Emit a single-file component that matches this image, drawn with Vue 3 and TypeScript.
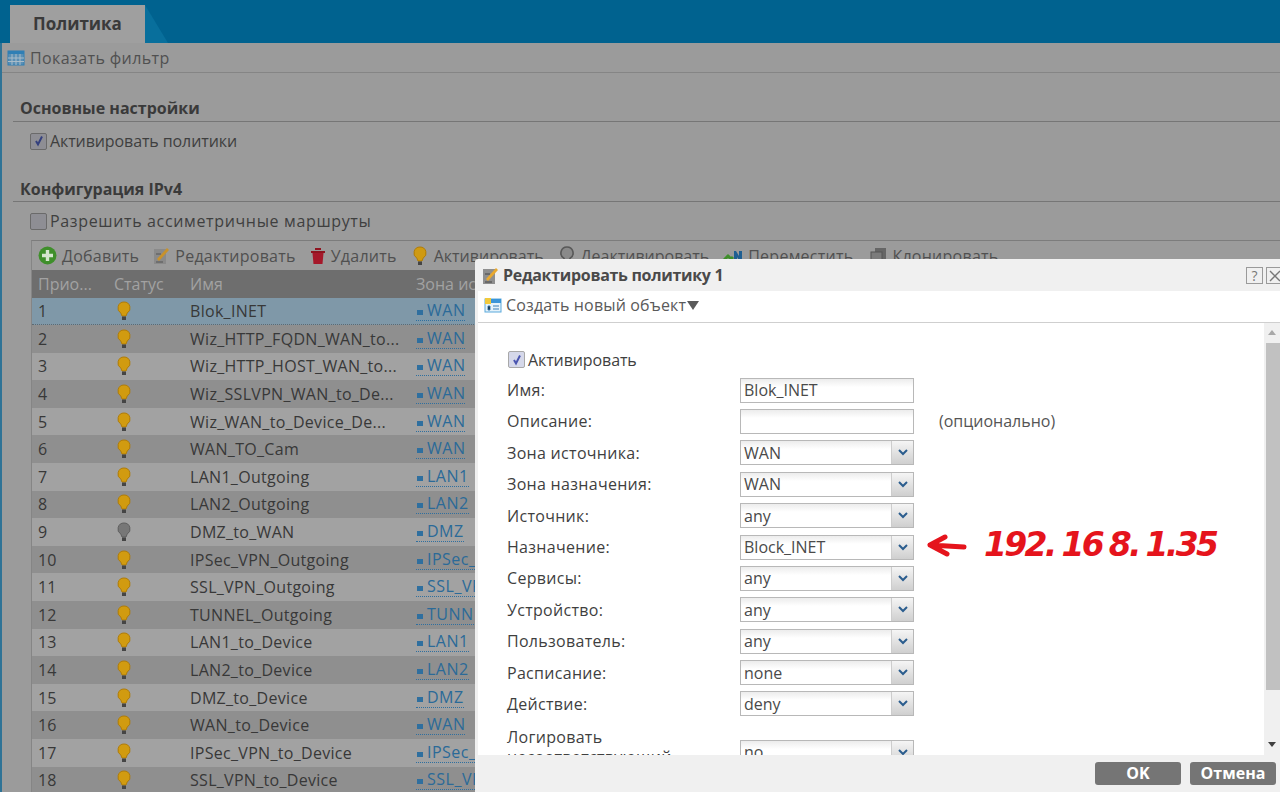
<template>
  <div class="page">
    <header class="topbar">
      <div class="tab">Политика</div>
    </header>

    <main class="content">
      <div class="filter">
        <svg class="ico" width="18" height="16" viewBox="0 0 18 16">
          <rect x="1" y="1" width="16" height="14" fill="#5a8fb4" stroke="#2f7fb5" />
          <rect x="1" y="1" width="16" height="3" fill="#2f7fb5" />
          <path d="M5 4v11M9 4v11M13 4v11M1 8h16M1 11.5h16" stroke="#a9bcc9" stroke-width="1" />
        </svg>
        <span>Показать фильтр</span>
      </div>

      <section class="settings">
        <h2 class="heading">Основные настройки</h2>
        <label class="check-row">
          <span class="box"><svg width="12" height="12" viewBox="0 0 12 12"><path d="M3 6l2 3.5L9 1.5" fill="none" stroke="#34407e" stroke-width="2" /></svg></span>
          Активировать политики
        </label>

        <h2 class="heading second">Конфигурация IPv4</h2>
        <label class="check-row wide">
          <span class="box"></span>
          Разрешить ассиметричные маршруты
        </label>
      </section>

      <div class="table">
        <div class="tools">
          <span class="tool">
            <svg width="19" height="19" viewBox="0 0 19 19"><circle cx="9.5" cy="9.5" r="9" fill="#3f8f2b" /><path d="M9.5 4v11M4 9.5h11" stroke="#d6e6cf" stroke-width="3.4" /></svg>
            Добавить
          </span>
          <span class="tool">
            <svg width="17" height="19" viewBox="0 0 17 19"><rect x="1" y="3" width="12" height="15" fill="#8a8a8a" /><path d="M4 13L14 2l2 2L6 15z" fill="#c8922c" /><path d="M3 8h5M3 16h7" stroke="#555" /></svg>
            Редактировать
          </span>
          <span class="tool">
            <svg width="16" height="18" viewBox="0 0 16 18"><path d="M1 4h14v2H1zM5 1h6v2H5z" fill="#8f1420" /><path d="M2.5 6h11l-1 11h-9z" fill="#a5182a" /></svg>
            Удалить
          </span>
          <span class="tool bulb-tool">
            <svg width="14" height="20" viewBox="0 0 14 20"><path d="M7 1a6 6 0 0 1 3.2 11.1L9 15H5l-1.2-2.9A6 6 0 0 1 7 1z" fill="#cf9a12" stroke="#b07c08" /><path d="M5 15.5h4V19H5z" fill="#454545" /></svg>
            Активировать
          </span>
          <span class="tool bulb-tool">
            <svg width="14" height="20" viewBox="0 0 14 20"><path d="M7 1a6 6 0 0 1 3.2 11.1L9 15H5l-1.2-2.9A6 6 0 0 1 7 1z" fill="#8a8a8a" stroke="#585858" stroke-width="1.6" /><path d="M5 15.5h4V19H5z" fill="#454545" /></svg>
            Деактивировать
          </span>
          <span class="tool">
            <svg width="20" height="16" viewBox="0 0 20 16"><path d="M1 12l4-4 3 3 2-2" fill="none" stroke="#3f8f2b" stroke-width="3" /><path d="M11 14V3h2l3 5V3h3v11h-2l-3-5v5z" fill="#1f5f92" /></svg>
            Переместить
          </span>
          <span class="tool last-tool">
            <svg width="17" height="18" viewBox="0 0 17 18"><rect x="5" y="1" width="11" height="12" fill="#666" /><rect x="1" y="5" width="11" height="12" fill="#7c7c7c" stroke="#555" /></svg>
            Клонировать
          </span>
        </div>

        <div class="thead">
          <span>Прио...</span>
          <span>Статус</span>
          <span>Имя</span>
          <span>Зона источника</span>
        </div>

        <div
          v-for="(row, i) in rows"
          :key="row.name"
          class="trow"
          :class="{ selected: i === 0, odd: i > 0 && i % 2 === 1 }"
        >
          <span>{{ i + 1 }}</span>
          <span class="bulb-cell">
            <svg width="14" height="20" viewBox="0 0 14 20">
              <path
                d="M7 1a6 6 0 0 1 3.2 11.1L9 15H5l-1.2-2.9A6 6 0 0 1 7 1z"
                :fill="row.off ? '#777' : '#d19b10'"
                :stroke="row.off ? '#5f5f5f' : '#b07c08'"
              />
              <path d="M5 15.5h4V19H5z" fill="#454545" />
            </svg>
          </span>
          <span class="name">{{ row.name }}</span>
          <span class="zone"><i class="zone-dot"></i>{{ row.zone }}</span>
        </div>
      </div>
    </main>

    <!-- dialog lies over the dimmed page -->
    <div class="dialog">
      <div class="dlg-title">
        <svg width="17" height="19" viewBox="0 0 17 19"><rect x="1" y="3" width="12" height="15" fill="#8f8f8f" /><path d="M4 13L14 2l2 2L6 15z" fill="#e9a92f" /><path d="M3 8h5M3 16h7" stroke="#444" /></svg>
        <strong>Редактировать политику 1</strong>
        <span class="win-btns">
          <span class="win-btn">?</span>
          <span class="win-btn">
            <svg width="12" height="12" viewBox="0 0 12 12"><path d="M1 1l10 10M11 1L1 11" stroke="#777" stroke-width="1.4" /></svg>
          </span>
        </span>
      </div>

      <div class="dlg-inner">
        <div class="dlg-tools">
          <svg width="18" height="16" viewBox="0 0 18 16"><rect x="1" y="2" width="16" height="13" fill="#e4f2fa" stroke="#5aa9dc" /><rect x="1" y="2" width="16" height="4" fill="#3b95d8" /><rect x="1" y="1" width="6" height="6" fill="#f1c93c" /><path d="M4 9h2v4H4zM9 9h6M9 12h6" stroke="#3b7fb5" /></svg>
          <span>Создать новый объект</span>
          <span class="caret"></span>
        </div>

        <div class="dlg-scrollarea">
          <div class="form">
            <label class="form-check">
              <span class="box light"><svg width="12" height="12" viewBox="0 0 12 12"><path d="M3 6l2 3.5L9 1.5" fill="none" stroke="#4a55b0" stroke-width="2" /></svg></span>
              Активировать
            </label>

            <div v-for="field in fields" :key="field.label" class="form-row" :class="{ tall: field.tall }">
              <span class="form-label">{{ field.label }}</span>
              <div class="control" :class="{ text: field.kind === 'text' }">
                <span class="value">{{ field.value }}</span>
                <span v-if="field.kind === 'select'" class="arrow">
                  <svg width="10" height="7" viewBox="0 0 10 7"><path d="M1 1l4 4 4-4" fill="none" stroke="#2b5d8e" stroke-width="2" /></svg>
                </span>
              </div>
              <span v-if="field.hint" class="hint">{{ field.hint }}</span>
            </div>
          </div>

          <div class="scrollbar">
            <span class="up"></span>
            <div class="thumb"></div>
            <span class="down"></span>
          </div>
        </div>
      </div>

      <div class="dlg-foot">
        <button class="btn" type="button">OK</button>
        <button class="btn" type="button">Отмена</button>
      </div>

      <!-- red marker note on top of the form -->
      <svg class="note-arrow" width="42" height="26" viewBox="0 0 42 26">
        <path d="M4 12L38 14M19 4L4 12L21 21" fill="none" stroke="#e5141c" stroke-width="5" stroke-linecap="round" stroke-linejoin="round" />
      </svg>
      <span class="note">192. 16 8. 1.35</span>
    </div>
  </div>
</template>

<script setup lang="ts">
interface Row {
  name: string;
  zone: string;
  off?: boolean;
}

interface Field {
  label: string;
  value: string;
  kind: 'text' | 'select';
  hint?: string;
  tall?: boolean;
}

const rows: Row[] = [
  { name: 'Blok_INET', zone: 'WAN' },
  { name: 'Wiz_HTTP_FQDN_WAN_to...', zone: 'WAN' },
  { name: 'Wiz_HTTP_HOST_WAN_to...', zone: 'WAN' },
  { name: 'Wiz_SSLVPN_WAN_to_De...', zone: 'WAN' },
  { name: 'Wiz_WAN_to_Device_De...', zone: 'WAN' },
  { name: 'WAN_TO_Cam', zone: 'WAN' },
  { name: 'LAN1_Outgoing', zone: 'LAN1' },
  { name: 'LAN2_Outgoing', zone: 'LAN2' },
  { name: 'DMZ_to_WAN', zone: 'DMZ', off: true },
  { name: 'IPSec_VPN_Outgoing', zone: 'IPSec_VPN' },
  { name: 'SSL_VPN_Outgoing', zone: 'SSL_VPN' },
  { name: 'TUNNEL_Outgoing', zone: 'TUNNEL' },
  { name: 'LAN1_to_Device', zone: 'LAN1' },
  { name: 'LAN2_to_Device', zone: 'LAN2' },
  { name: 'DMZ_to_Device', zone: 'DMZ' },
  { name: 'WAN_to_Device', zone: 'WAN' },
  { name: 'IPSec_VPN_to_Device', zone: 'IPSec_VPN' },
  { name: 'SSL_VPN_to_Device', zone: 'SSL_VPN' },
];

const fields: Field[] = [
  { label: 'Имя:', value: 'Blok_INET', kind: 'text' },
  { label: 'Описание:', value: '', kind: 'text', hint: '(опционально)' },
  { label: 'Зона источника:', value: 'WAN', kind: 'select' },
  { label: 'Зона назначения:', value: 'WAN', kind: 'select' },
  { label: 'Источник:', value: 'any', kind: 'select' },
  { label: 'Назначение:', value: 'Block_INET', kind: 'select' },
  { label: 'Сервисы:', value: 'any', kind: 'select' },
  { label: 'Устройство:', value: 'any', kind: 'select' },
  { label: 'Пользователь:', value: 'any', kind: 'select' },
  { label: 'Расписание:', value: 'none', kind: 'select' },
  { label: 'Действие:', value: 'deny', kind: 'select' },
  { label: 'Логировать несоответствующий трафик:', value: 'no', kind: 'select', tall: true },
];
</script>

<style scoped>
.page {
  position: relative;
  width: 1280px;
  height: 792px;
  overflow: hidden;
  background: #9b9b9b;
  font-family: "Open Sans", "Noto Sans", sans-serif;
  font-size: 16px;
  color: #3c3c3c;
}

.topbar {
  height: 43px;
  background: #00628f;
  padding: 5px 0 0 10px;
  box-sizing: border-box;
}

.tab {
  position: relative;
  width: 135px;
  height: 38px;
  background: #9f9f9f;
  font-size: 17px;
  font-weight: 700;
  line-height: 38px;
  padding-left: 23px;
  box-sizing: border-box;
  color: #3a3a3a;
}

.tab::after {
  content: "";
  position: absolute;
  left: 100%;
  top: 0;
  width: 23px;
  height: 38px;
  background: #086f9c;
  clip-path: polygon(0 0, 100% 100%, 0 100%);
}

.content {
  border-left: 2px solid #2f7396;
}

.filter {
  display: flex;
  align-items: center;
  gap: 5px;
  height: 30px;
  padding-left: 5px;
  border-bottom: 1px solid #858585;
  box-sizing: border-box;
  color: #505050;
  letter-spacing: 0.4px;
}

.settings {
  padding-left: 11px;
}

.heading {
  margin: 0;
  height: 49px;
  padding: 24px 0 0 7px;
  box-sizing: border-box;
  border-bottom: 1px solid #767676;
  font-size: 16px;
  line-height: 22px;
  font-weight: 700;
  color: #3a3a3a;
}

.heading.second {
  height: 42px;
  padding-top: 18px;
}

.check-row {
  display: flex;
  align-items: center;
  gap: 3px;
  height: 38px;
  padding-left: 17px;
  color: #3f3f3f;
  letter-spacing: -0.1px;
}

.check-row.wide {
  letter-spacing: 0.65px;
}

.box {
  display: flex;
  align-items: center;
  justify-content: center;
  width: 15px;
  height: 15px;
  background: #8e8e94;
  border: 1px solid #6a6a6a;
  border-radius: 2px;
}

.box.light {
  background: #d5d8ea;
  border-color: #a8a8a8;
}

.table {
  margin-left: 29px;
  border-left: 1px solid #858585;
  border-top: 1px solid #7c7c7c;
}

.tools {
  display: flex;
  align-items: center;
  gap: 14px;
  height: 29px;
  padding-left: 6px;
  color: #505050;
  letter-spacing: 0.25px;
}

.tool {
  display: flex;
  align-items: center;
  gap: 5px;
  white-space: nowrap;
}

.bulb-tool {
  gap: 7px;
  margin-left: 2px;
  letter-spacing: 0;
}

.last-tool {
  margin-left: 3px;
}

.thead,
.trow {
  display: grid;
  grid-template-columns: 76px 76px 226px 1fr;
  align-items: center;
  padding-left: 6px;
}

.thead {
  height: 27.5px;
  background: #6e6e6e;
  color: #a2a2a2;
}

.trow {
  height: 27.6px;
  background: #a2a2a2;
  color: #383838;
}

.trow.odd {
  background: #8f8f8f;
}

.trow.selected {
  background: #7f98a8;
  border-bottom: 1px dotted #5e6a72;
  box-sizing: border-box;
}

.bulb-cell {
  display: flex;
  padding-left: 3px;
}

.name {
  white-space: nowrap;
  letter-spacing: 0.3px;
}

.zone {
  display: flex;
  align-items: center;
  gap: 4px;
  justify-self: start;
  line-height: 19px;
  border-bottom: 1px dotted #2f6f9f;
  color: #2b6a98;
  letter-spacing: 0.5px;
}

.zone-dot {
  display: block;
  width: 6px;
  height: 5px;
  background: #2f6f9f;
  margin: 4px 0 0 1px;
}

.dialog {
  position: absolute;
  left: 475px;
  top: 259px;
  width: 805px;
  height: 533px;
  display: flex;
  flex-direction: column;
  background: #f0f0f0;
  border-radius: 3px 0 0 0;
}

.dlg-title {
  display: flex;
  align-items: center;
  gap: 4px;
  height: 32px;
  flex: none;
  padding-left: 7px;
  color: #4a4a4a;
}

.dlg-title strong {
  font-size: 16px;
  letter-spacing: -0.3px;
}

.win-btns {
  display: flex;
  gap: 3px;
  margin-left: auto;
  margin-top: 1px;
}

.win-btn {
  display: flex;
  align-items: center;
  justify-content: center;
  width: 15px;
  height: 15px;
  border: 1px solid #9a9a9a;
  font-size: 14px;
  color: #777;
}

.win-btns .win-btn:last-child {
  margin-right: -3px;
}

.dlg-inner {
  flex: 1;
  min-height: 0;
  margin-left: 3px;
  display: flex;
  flex-direction: column;
  background: #fff;
}

.dlg-tools {
  display: flex;
  align-items: center;
  gap: 4px;
  height: 32px;
  flex: none;
  padding: 0 0 3px 6px;
  border-bottom: 1px solid #cfcfcf;
  box-sizing: border-box;
  color: #5a5a5a;
  letter-spacing: 0.15px;
}

.caret {
  width: 0;
  height: 0;
  margin-left: -3px;
  border-left: 6px solid transparent;
  border-right: 6px solid transparent;
  border-top: 9px solid #5a5a5a;
}

.dlg-scrollarea {
  flex: 1;
  min-height: 0;
  display: flex;
}

.form {
  flex: 1;
  min-width: 0;
  overflow: hidden;
  padding: 22px 0 0 29px;
  color: #3f3f3f;
}

.form-check {
  display: flex;
  align-items: center;
  gap: 3px;
  height: 29.4px;
  padding-left: 1px;
  letter-spacing: -0.1px;
}

.form-row {
  display: flex;
  align-items: center;
  height: 31.4px;
}

.form-row.tall {
  height: 52px;
  align-items: flex-end;
  margin-top: 7px;
}

.form-label {
  width: 233px;
  flex: none;
  letter-spacing: 0.3px;
}

.form-row.tall .form-label {
  width: 200px;
  margin-right: 33px;
  line-height: 20px;
  align-self: flex-start;
}

.control {
  display: flex;
  align-items: center;
  width: 174px;
  height: 25px;
  flex: none;
  box-sizing: border-box;
  border: 1px solid #b8b8b8;
  background: linear-gradient(#ececec, #fff 35%);
  color: #4a4a4a;
}

.form-row.tall .control {
  align-self: flex-start;
  margin-top: 13px;
}

.value {
  flex: 1;
  padding-left: 3px;
  line-height: 22px;
}

.arrow {
  display: flex;
  align-items: center;
  justify-content: center;
  width: 21px;
  height: 100%;
  background: linear-gradient(#f5f5f5, #cfcfcf);
  border-left: 1px solid #cdcdcd;
}

.hint {
  margin-left: 25px;
  color: #555;
}

.scrollbar {
  position: relative;
  flex: none;
  width: 16px;
  background: #f0f0f0;
  display: flex;
  flex-direction: column;
  align-items: flex-end;
}

.thumb {
  width: 14px;
  height: 347px;
  background: #c1c1c1;
}

.up,
.down {
  display: block;
  align-self: center;
  width: 0;
  height: 0;
  border-left: 4px solid transparent;
  border-right: 4px solid transparent;
}

.up {
  margin: 7px 0 8px;
  border-bottom: 5px solid #a8a8a8;
}

.down {
  margin-top: 52px;
  border-top: 5px solid #404040;
}

.dlg-foot {
  display: flex;
  justify-content: flex-end;
  gap: 9px;
  height: 37px;
  flex: none;
  padding: 7px 4px 0 0;
  box-sizing: border-box;
  background: #f0f0f0;
}

.btn {
  width: 86px;
  height: 23px;
  border: 0;
  border-radius: 3px;
  padding: 0;
  background: #757575;
  color: #fff;
  font-family: inherit;
  font-size: 16px;
  font-weight: 700;
  line-height: 23px;
}

.note-arrow {
  position: absolute;
  left: 451px;
  top: 274px;
}

.note {
  position: absolute;
  left: 509px;
  top: 263px;
  font-family: "DejaVu Sans", sans-serif;
  font-size: 33px;
  font-weight: 700;
  font-style: italic;
  line-height: 46px;
  letter-spacing: -2.7px;
  word-spacing: -2px;
  white-space: nowrap;
  color: #e5141c;
}
</style>

<style>
html,
body {
  margin: 0;
  overflow: hidden;
}
</style>
